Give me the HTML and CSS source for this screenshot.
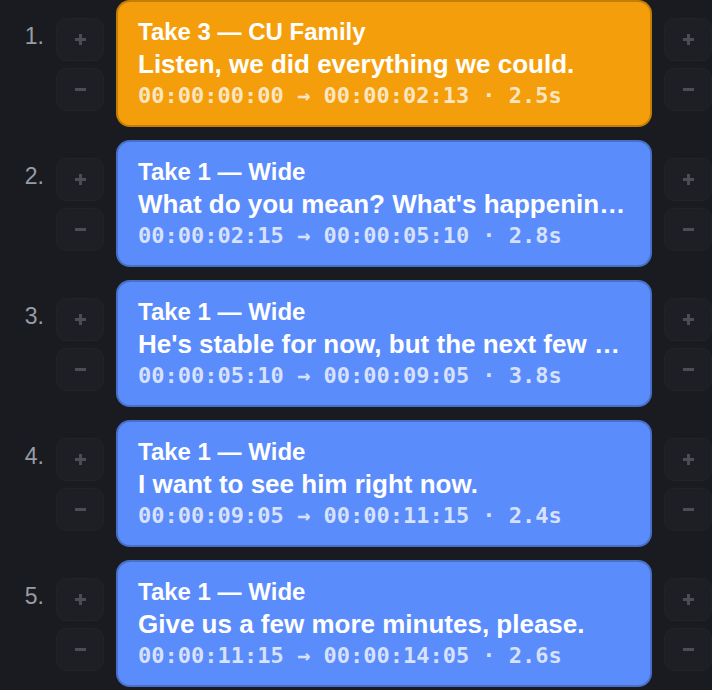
FILE: index.html
```html
<!DOCTYPE html>
<html lang="en">
<head>
    <meta charset="UTF-8">
    <meta name="viewport" content="width=device-width, initial-scale=1.0">
    <title>Cuts</title>
    <link rel="stylesheet" href="styles.css">
</head>
<body>
    <ol class="cuts">
        <li class="cut">
            <span class="num">1.</span>
            <div class="btns">
                <button class="btn"><svg viewBox="0 0 14 14"><path d="M7 1v12M1 7h12"/></svg></button>
                <button class="btn"><svg viewBox="0 0 14 14"><path d="M1 7h12"/></svg></button>
            </div>
            <div class="card card-active">
                <div class="take">Take 3 — CU Family</div>
                <div class="line">Listen, we did everything we could.</div>
                <div class="tc">00:00:00:00 → 00:00:02:13 · 2.5s</div>
            </div>
            <div class="btns">
                <button class="btn"><svg viewBox="0 0 14 14"><path d="M7 1v12M1 7h12"/></svg></button>
                <button class="btn"><svg viewBox="0 0 14 14"><path d="M1 7h12"/></svg></button>
            </div>
        </li>
        <li class="cut">
            <span class="num">2.</span>
            <div class="btns">
                <button class="btn"><svg viewBox="0 0 14 14"><path d="M7 1v12M1 7h12"/></svg></button>
                <button class="btn"><svg viewBox="0 0 14 14"><path d="M1 7h12"/></svg></button>
            </div>
            <div class="card">
                <div class="take">Take 1 — Wide</div>
                <div class="line">What do you mean? What's happening to him? Is he going to be okay?</div>
                <div class="tc">00:00:02:15 → 00:00:05:10 · 2.8s</div>
            </div>
            <div class="btns">
                <button class="btn"><svg viewBox="0 0 14 14"><path d="M7 1v12M1 7h12"/></svg></button>
                <button class="btn"><svg viewBox="0 0 14 14"><path d="M1 7h12"/></svg></button>
            </div>
        </li>
        <li class="cut">
            <span class="num">3.</span>
            <div class="btns">
                <button class="btn"><svg viewBox="0 0 14 14"><path d="M7 1v12M1 7h12"/></svg></button>
                <button class="btn"><svg viewBox="0 0 14 14"><path d="M1 7h12"/></svg></button>
            </div>
            <div class="card">
                <div class="take">Take 1 — Wide</div>
                <div class="line">He's stable for now, but the next few hours are critical.</div>
                <div class="tc">00:00:05:10 → 00:00:09:05 · 3.8s</div>
            </div>
            <div class="btns">
                <button class="btn"><svg viewBox="0 0 14 14"><path d="M7 1v12M1 7h12"/></svg></button>
                <button class="btn"><svg viewBox="0 0 14 14"><path d="M1 7h12"/></svg></button>
            </div>
        </li>
        <li class="cut">
            <span class="num">4.</span>
            <div class="btns">
                <button class="btn"><svg viewBox="0 0 14 14"><path d="M7 1v12M1 7h12"/></svg></button>
                <button class="btn"><svg viewBox="0 0 14 14"><path d="M1 7h12"/></svg></button>
            </div>
            <div class="card">
                <div class="take">Take 1 — Wide</div>
                <div class="line">I want to see him right now.</div>
                <div class="tc">00:00:09:05 → 00:00:11:15 · 2.4s</div>
            </div>
            <div class="btns">
                <button class="btn"><svg viewBox="0 0 14 14"><path d="M7 1v12M1 7h12"/></svg></button>
                <button class="btn"><svg viewBox="0 0 14 14"><path d="M1 7h12"/></svg></button>
            </div>
        </li>
        <li class="cut">
            <span class="num">5.</span>
            <div class="btns">
                <button class="btn"><svg viewBox="0 0 14 14"><path d="M7 1v12M1 7h12"/></svg></button>
                <button class="btn"><svg viewBox="0 0 14 14"><path d="M1 7h12"/></svg></button>
            </div>
            <div class="card">
                <div class="take">Take 1 — Wide</div>
                <div class="line">Give us a few more minutes, please.</div>
                <div class="tc">00:00:11:15 → 00:00:14:05 · 2.6s</div>
            </div>
            <div class="btns">
                <button class="btn"><svg viewBox="0 0 14 14"><path d="M7 1v12M1 7h12"/></svg></button>
                <button class="btn"><svg viewBox="0 0 14 14"><path d="M1 7h12"/></svg></button>
            </div>
        </li>
    </ol>
</body>
</html>
```

FILE: styles.css
```css
html, body {
    margin: 0;
    background-color: #191b21;
    font-family: "Liberation Sans", Arial, Helvetica, sans-serif;
}
.cuts {
    list-style: none;
    margin: 0;
    padding: 0;
    width: 712px;
}
.cut {
    display: flex;
    align-items: flex-start;
    gap: 12px;
    margin-bottom: 13px;
}
.num {
    width: 44px;
    flex: none;
    padding-top: 23px;
    text-align: right;
    font-size: 23px;
    line-height: 26px;
    color: #979ca6;
}
.btns {
    width: 48px;
    flex: none;
    display: flex;
    flex-direction: column;
    gap: 7px;
    padding-top: 18px;
}
.btn {
    height: 43px;
    padding: 0;
    display: flex;
    align-items: center;
    justify-content: center;
    background-color: #1d1f25;
    border: 1px solid #202328;
    border-radius: 10px;
    cursor: pointer;
}
.btn svg {
    width: 13px;
    height: 13px;
    fill: none;
    stroke: #4a4e57;
    stroke-width: 3.2;
}
.card {
    flex: 1;
    min-width: 0;
    height: 127px;
    box-sizing: border-box;
    padding: 15px 20px;
    background-color: #5b8cfc;
    border: 2px solid rgba(0, 0, 0, .2);
    border-radius: 14px;
    color: white;
    font-weight: bold;
}
.card-active {
    background-color: #f59e0b;
}
.take {
    font-size: 24px;
    line-height: 30px;
}
.line {
    padding-top: 1px;
    font-size: 26px;
    line-height: 33px;
    white-space: nowrap;
    overflow: hidden;
    text-overflow: ellipsis;
}
.tc {
    font-family: "DejaVu Sans Mono", monospace;
    font-size: 22px;
    line-height: 29px;
    color: rgba(255, 255, 255, .75);
    white-space: nowrap;
}
```
